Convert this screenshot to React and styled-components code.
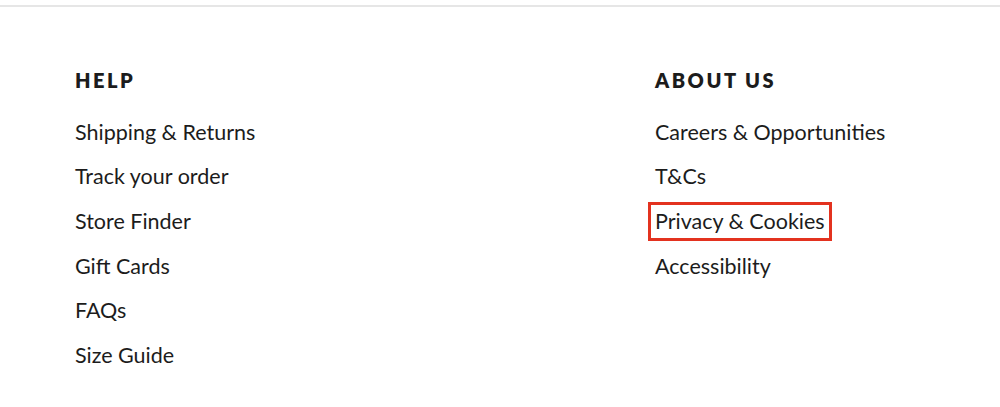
import React from 'react';
import styled, { createGlobalStyle } from 'styled-components';

const GlobalStyle = createGlobalStyle`
  body {
    margin: 0;
    background: #fff;
    font-family: Lato, "Noto Sans", sans-serif;
    color: #1c1c1c;
  }
`;

const Footer = styled.footer`
  width: 1000px;
  height: 407px;
  border-top: 2px solid #e6e6e6;
  margin-top: 5px;
  box-sizing: border-box;
  padding: 61px 0 0 75px;
  display: grid;
  grid-template-columns: 580px 1fr;
`;

const Column = styled.div`
  display: flex;
  flex-direction: column;
`;

const Heading = styled.h3`
  margin: 0 0 18px;
  font-size: 20px;
  font-weight: 800;
  letter-spacing: 2.5px;
  line-height: 24px;
  text-transform: uppercase;
`;

const List = styled.ul`
  list-style: none;
  margin: 0;
  padding: 0;
  display: flex;
  flex-direction: column;
`;

const Item = styled.li`
  height: 44.6px;
  display: flex;
  align-items: center;
`;

const Link = styled.a`
  font-size: 21.5px;
  line-height: 25px;
  color: #1c1c1c;
  text-decoration: none;
  outline: ${({ $marked }) => ($marked ? '3px solid #e3321f' : 'none')};
  outline-offset: 4px;
`;

const sections = [
  {
    title: 'Help',
    links: ['Shipping & Returns', 'Track your order', 'Store Finder', 'Gift Cards', 'FAQs', 'Size Guide'],
  },
  {
    title: 'About us',
    links: ['Careers & Opportunities', 'T&Cs', 'Privacy & Cookies', 'Accessibility'],
  },
];

export default function App() {
  return (
    <>
      <GlobalStyle />
      <Footer>
        {sections.map((s) => (
          <Column key={s.title}>
            <Heading>{s.title}</Heading>
            <List>
              {s.links.map((l) => (
                <Item key={l}>
                  <Link href="#" $marked={l === 'Privacy & Cookies'}>{l}</Link>
                </Item>
              ))}
            </List>
          </Column>
        ))}
      </Footer>
    </>
  );
}
